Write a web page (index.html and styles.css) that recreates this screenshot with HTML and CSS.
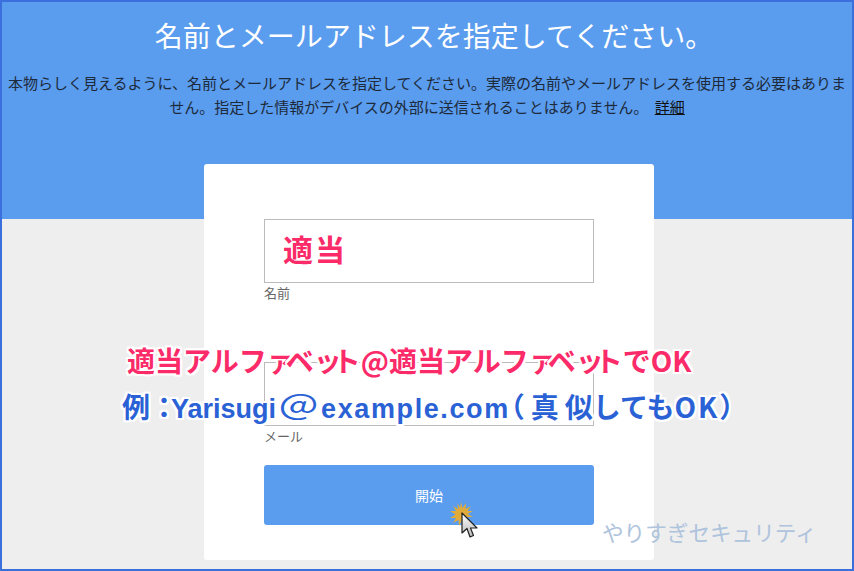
FILE: index.html
```html
<!DOCTYPE html>
<html lang="ja">

<head>
  <meta charset="UTF-8">
  <title>名前とメールアドレスを指定してください。</title>
  <meta name="viewport" content="width=device-width, initial-scale=1">
  <link rel="stylesheet" href="styles.css">
</head>

<body>
  <div class="frame">
    <header class="hero">
      <h1>名前とメールアドレスを指定してください。</h1>
      <p>本物らしく見えるように、名前とメールアドレスを指定してください。実際の名前やメールアドレスを使用する必要はありません。指定した情報がデバイスの外部に送信されることはありません。 <a href="#">詳細</a></p>
    </header>

    <form class="card">
      <div class="field">
        <div class="field-box"><span class="field-value">適当</span></div>
        <label>名前</label>
      </div>
      <div class="field">
        <div class="field-box"></div>
        <label>メール</label>
      </div>
      <button type="button" class="start">開始</button>
    </form>

    <!-- annotations on top of the screenshot -->
    <div class="note note-pink">適当アルフ<span class="tight">ァ</span>ベ<span class="tight">ッ</span>ト@適当アルフ<span class="tight">ァ</span>ベ<span class="tight">ッ</span>トでOK</div>
    <div class="note note-blue">例<span class="colon">：</span><span class="name">Yarisugi</span><span class="at">＠</span><span class="domain">example.com</span><span class="paren">（</span><span class="wide">真</span>似しても<span class="ok">OK</span>）</div>
    <div class="watermark">やりすぎセキュリティ</div>

    <svg class="pointer" width="30" height="38" viewBox="0 0 30 38">
      <defs>
        <linearGradient id="arrowFill" x1="0" y1="0" x2="0" y2="1">
          <stop offset="0" stop-color="#ffffff" />
          <stop offset="1" stop-color="#b8b8b8" />
        </linearGradient>
      </defs>
      <polygon fill="#e0ab3a" points="12,1 13.500,7 17,2 16.500,8 22,5 18.500,10 24,10 18.500,13 24,16 18,16 21,21 16,18 16,24 13,19 10,25 9.500,19 4,22 7,17 1,17 6.500,13.500 1,10 7,10 4,5 9,8 8.500,2 11,7" />
      <path d="M13 12 L13 32 L18 27.500 L21 36 L24.500 34.500 L21.500 27 L28 27 Z" fill="url(#arrowFill)" stroke="#222" stroke-width="1.200" stroke-linejoin="round" />
    </svg>
  </div>
</body>

</html>
```

FILE: styles.css
```css
* {
  box-sizing: border-box;
}

body {
  margin: 0;
  font-family: "Noto Sans CJK JP", "Liberation Sans", sans-serif;
}

.frame {
  position: relative;
  width: 854px;
  height: 571px;
  overflow: hidden;
  background: #eeeeee;
  border: 2px solid #3b70dc;
}

.hero {
  height: 217px;
  padding-top: 13px;
  background: #5a9cee;
  text-align: center;
}

.hero h1 {
  margin: 0;
  padding-left: 14px;
  color: #fff;
  font-size: 28px;
  font-weight: 400;
  line-height: 40px;
}

.hero p {
  margin: 16px 5px 0;
  color: #1d2a3a;
  font-size: 15px;
  line-height: 24px;
}

.hero a {
  margin-left: 3px;
  color: #111;
  text-decoration: underline;
}

.card {
  width: 450px;
  height: 396px;
  margin: -55px 0 0 202px;
  padding: 55px 60px 0;
  background: #fff;
  border-radius: 3px;
}

.field-box {
  display: flex;
  align-items: center;
  height: 64px;
  padding: 0 0 6px 18px;
  border: 1px solid #bbbbbb;
}

.field-value {
  color: #fb2a68;
  font-size: 30px;
  font-weight: 700;
  letter-spacing: 2px;
}

.field label {
  display: block;
  height: 20px;
  margin-top: 1px;
  color: #666;
  font-size: 13px;
  line-height: 18px;
}

.field + .field {
  margin-top: 58px;
  margin-bottom: 18px;
}

.start {
  display: block;
  width: 330px;
  height: 60px;
  padding: 0;
  background: #5a9cee;
  border: none;
  border-radius: 3px;
  color: #fff;
  font-family: inherit;
  font-size: 14px;
}

.note {
  position: absolute;
  font-weight: 700;
  white-space: nowrap;
  text-shadow: -2px 0 0 #fff, 2px 0 0 #fff, 0 -2px 0 #fff, 0 2px 0 #fff, -2px -2px 0 #fff, 2px -2px 0 #fff, -2px 2px 0 #fff, 2px 2px 0 #fff;
}

.note-pink {
  left: 125px;
  top: 339px;
  color: #fb2a68;
  font-size: 28px;
  line-height: 38px;
}

.note-pink .tight {
  letter-spacing: -9px;
}

.note-blue {
  left: 120px;
  top: 385px;
  height: 38px;
  color: #2a62d6;
  font-size: 28px;
  line-height: 38px;
}

.colon {
  letter-spacing: -7px;
}

.name,
.domain {
  font-family: "Liberation Sans", sans-serif;
  font-size: 27px;
}

.domain {
  letter-spacing: 1.6px;
}

/* the at sign is stretched sideways in the reference */
.at {
  display: inline-block;
  width: 45px;
  font-weight: 400;
  text-align: center;
  transform: scaleX(1.5);
}

.paren {
  margin-left: -13px;
  letter-spacing: 6px;
}

.wide {
  letter-spacing: 6px;
}

.ok {
  letter-spacing: 2px;
}

.watermark {
  position: absolute;
  left: 600px;
  top: 515px;
  color: #aec3dc;
  font-size: 21.6px;
  line-height: 30px;
}

.pointer {
  position: absolute;
  left: 447px;
  top: 499px;
}
```
